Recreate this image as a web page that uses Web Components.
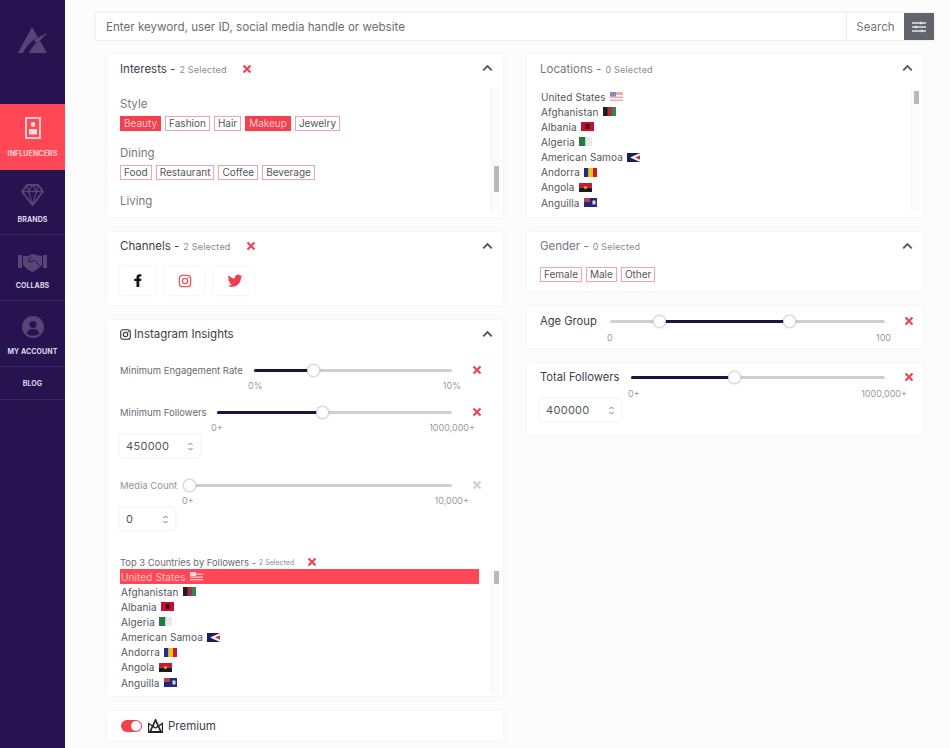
<!DOCTYPE html>
<html><head><meta charset="utf-8">
<style>
html,body{margin:0;height:748px;overflow:hidden;background:#fcfcfc;font-family:Inter,"Liberation Sans",sans-serif;color:#3c3c44}
#app{display:flex;height:748px}
#main{flex:1;min-width:0;display:flex;flex-direction:column;padding:13px 16px 0 30px;gap:14px}
#cols{display:grid;grid-template-columns:396px 396px;column-gap:24px;padding-left:12px}
.col{display:flex;flex-direction:column;gap:15px}
</style></head><body>
<template id="t-card"><style>
:host{display:block;background:#fff;box-shadow:0 0 4px rgba(0,0,0,.06);box-sizing:border-box;position:relative;padding:0 13px}
.head{display:flex;align-items:center;height:var(--hh,30px);font-size:11.5px;color:var(--hc,#3e3e48)}
.sub{font-size:9px;color:#8b8b92;margin-left:4px;letter-spacing:.2px}
.chev{position:absolute;right:10px;top:10px}
</style><div class="head"><slot name="icon"></slot><span id="t"></span><span class="sub" id="s"></span><span id="x"></span></div>
<svg class="chev" width="11" height="8" viewBox="0 0 11 8"><path d="M1.2 6.400 5.500 2l4.300 4.400" fill="none" stroke="#555" stroke-width="1.800"/></svg>
<slot></slot></template>

<template id="t-tag"><style>
:host{display:inline-block;font-size:10px;line-height:13px;padding:0 3px;border:1px solid #eda7ae;color:#55555c;box-shadow:0 0 1px rgba(0,0,0,.15)}
:host([on]){background:#f2404f;color:#ffc7cc;border-color:#f2404f}
</style><slot></slot></template>

<template id="t-navitem"><style>
:host{display:flex;flex-direction:column;align-items:center;justify-content:flex-end;box-sizing:border-box;border-bottom:1px solid #38265f;color:#ddd8e8;font-size:7px;font-weight:700;letter-spacing:.1px;padding-bottom:10px;height:66px}
:host([active]){background:#ff4756;color:#ffd0d4;border-bottom:0;padding-bottom:12px}
:host([plain]){height:33px;padding-bottom:11px}
.i{display:flex;margin-bottom:9px}
:host([active]) .i{margin-bottom:10px}
</style><div class="i"><slot name="icon"></slot></div><slot></slot></template>

<template id="t-close"><style>
:host{display:inline-flex}
</style><svg width="10" height="10" viewBox="0 0 10 10"><path d="M1.500 1.500l7 7M8.500 1.500l-7 7" stroke="currentColor" stroke-width="2.100"/></svg></template>

<template id="t-slider"><style>
:host{display:block;position:relative;font-size:9.5px;color:#6a6a72}
.row{display:flex;align-items:center;height:14px}
.lab{white-space:nowrap;margin-right:var(--lg,10px)}
.tw{flex:1;min-width:0;position:relative;height:3px;background:#cfcfd2;border-radius:2px;margin-right:var(--rg,51px)}
.fill{position:absolute;top:0;height:3px;background:#1b1340;border-radius:2px}
.th{position:absolute;top:-5px;width:13px;height:13px;margin-left:-6px;background:#fff;border-radius:50%;border:1px solid #d8d8da;box-sizing:border-box;box-shadow:0 0 2px rgba(0,0,0,.25)}
.ends{display:flex;justify-content:space-between;font-size:9px;color:#9a9aa0;line-height:11px;margin-top:var(--et,3px);margin-right:var(--er,28px);margin-left:var(--ei,0)}
x-close{position:absolute;right:var(--xr,16px);top:2px;color:#ec4152}
:host([off]) x-close{color:#cfcfd2}
:host([off]) .lab{color:#94949a}
</style><div class="row"><span class="lab" id="l"></span><div class="tw" id="tw"></div><x-close></x-close></div><div class="ends"><span id="a"></span><span id="b"></span></div></template>

<template id="t-stepper"><style>
:host{display:flex;align-items:center;box-sizing:border-box;height:22px;font-size:11px;color:#55555c;padding:0 6px;box-shadow:0 0 3px rgba(0,0,0,.1);background:#fff;justify-content:space-between;letter-spacing:.3px}
</style><slot></slot><svg width="7" height="11" viewBox="0 0 7 11"><path d="M1.500 4 3.500 2l2 2M1.500 7l2 2 2-2" fill="none" stroke="#777" stroke-width="1"/></svg></template>

<template id="t-flagrow"><style>
:host{display:flex;align-items:center;height:15.15px;font-size:10px;color:#55555c;letter-spacing:.1px;white-space:nowrap}
:host([on]){background:#ff4756;color:#ffc7cc}
svg{margin-left:4px;display:block}
</style><slot></slot><svg id="f" width="13" height="9" viewBox="0 0 13 9"></svg></template>

<template id="t-countries"><style>
:host{display:block;position:relative;overflow:hidden;margin-right:-10px}
.bar{position:absolute;right:0;top:0;bottom:0;width:9px;background:#fbfbfb;border-left:1px solid #f3f3f3;box-sizing:border-box}
.bar i{position:absolute;left:2px;width:5px;height:13px;top:var(--bt,2px);background:#b9b9bc}
.rows{margin-right:var(--lr,12px)}
</style><div class="rows"><slot></slot></div><div class="bar"><i></i></div></template>

<div id="app">
<app-sidebar></app-sidebar>
<div id="main">
<search-bar></search-bar>
<div id="cols">
<div class="col">
<filter-card title="Interests -" sub="2 Selected" close style="height:163px">
 <interest-list></interest-list>
</filter-card>
<filter-card title="Channels -" sub="2 Selected" close style="height:73px;--hh:28px">
 <channel-row></channel-row>
</filter-card>
<filter-card title="Instagram Insights" style="height:376px;--hh:28px">
 <svg slot="icon" width="11" height="11" viewBox="0 0 12 12" style="margin-right:3px"><rect x=".8" y=".8" width="10.400" height="10.400" rx="2.600" fill="none" stroke="#333" stroke-width="1.200"/><circle cx="6" cy="6" r="2.400" fill="none" stroke="#333" stroke-width="1.200"/><circle cx="9" cy="3" r=".7" fill="#333"/></svg>
 <insta-body></insta-body>
</filter-card>
<premium-card></premium-card>
</div>
<div class="col">
<filter-card title="Locations -" sub="0 Selected" style="height:163px;--hc:#77777e">
 <x-countries style="margin-top:5px;height:121px"></x-countries>
</filter-card>
<filter-card title="Gender -" sub="0 Selected" style="height:59px;--hc:#77777e;--hh:28px">
 <tag-line style="margin-top:7px" items="Female,Male,Other" gap="4"></tag-line>
</filter-card>
<slider-card style="height:42px">
 <x-slider label="Age Group" a="0" b="100" from="18" to="65" style="font-size:11.2px;color:#3e3e48;--lg:13px;--rg:25px;--xr:-4px;--er:19px;--et:4px;--ei:67px"></x-slider>
</slider-card>
<slider-card style="height:72px;padding-top:7px">
 <x-slider label="Total Followers" a="0+" b="1000,000+" from="0" to="40.500" style="font-size:11.2px;color:#3e3e48;--lg:12px;--rg:25px;--xr:-4px;--er:3px;--et:4px;--ei:88px"></x-slider>
 <x-stepper style="width:81px">400000</x-stepper>
</slider-card>
</div>
</div>
</div>
</div>
<script>
const tpl=id=>document.getElementById(id).content.cloneNode(true);
const def=(n,c)=>customElements.define(n,c);
const shadow=(el,id)=>{const r=el.attachShadow({mode:'open'});r.appendChild(tpl(id));return r};
const svg=(w,h,vb,inner,extra='')=>`<svg slot="icon" width="${w}" height="${h}" viewBox="${vb}" ${extra}>${inner}</svg>`;

class XClose extends HTMLElement{constructor(){super();shadow(this,'t-close')}}
def('x-close',XClose);

class FilterCard extends HTMLElement{constructor(){super();const r=shadow(this,'t-card');
 r.getElementById('t').textContent=this.getAttribute('title');
 r.getElementById('s').textContent=this.getAttribute('sub')||'';
 if(this.hasAttribute('close')){const c=document.createElement('x-close');c.style.color='#ec4152';const x=r.getElementById('x');x.append(c);x.style.marginLeft='15px';x.style.display='inline-flex'}
 this.removeAttribute('title');}}
def('filter-card',FilterCard);

class XTag extends HTMLElement{constructor(){super();shadow(this,'t-tag')}}
def('x-tag',XTag);

class TagLine extends HTMLElement{connectedCallback(){
 if(this.shadowRoot)return;const r=this.attachShadow({mode:'open'});
 const g=this.getAttribute('gap')||4,on=(this.getAttribute('on')||'').split(',');
 r.innerHTML=`<style>:host{display:flex;gap:${g}px}</style>`+this.getAttribute('items').split(',').map(t=>`<x-tag ${on.includes(t)?'on':''}>${t}</x-tag>`).join('');
}}
def('tag-line',TagLine);

class InterestList extends HTMLElement{constructor(){super();const r=this.attachShadow({mode:'open'});
 r.innerHTML=`<style>:host{display:block;position:relative;height:125px;margin:4px -10px 0 0;padding-top:9px;box-sizing:border-box;overflow:hidden}
 h4{margin:0;font-weight:400;font-size:11.5px;line-height:15px;color:#77777e}
 tag-line{margin:4px 0 14.500px}
 .bar{position:absolute;right:0;top:0;bottom:0;width:9px;background:#fbfbfb;border-left:1px solid #f4f4f4;box-sizing:border-box}
 .bar i{position:absolute;left:2px;top:78px;width:5px;height:26px;background:#b9b9bc}</style>
 <h4>Style</h4><tag-line items="Beauty,Fashion,Hair,Makeup,Jewelry" on="Beauty,Makeup"></tag-line>
 <h4>Dining</h4><tag-line items="Food,Restaurant,Coffee,Beverage"></tag-line>
 <h4>Living</h4><div class="bar"><i></i></div>`;}}
def('interest-list',InterestList);

const fb='<path d="M10 20v-8H7V9h3V7c0-2.500 1.500-4 4-4h2.500v3H15c-1 0-1.300.5-1.300 1.300V9h2.900l-.5 3h-2.400v8z" fill="#111"/>';
const ig='<rect x="4.500" y="4.500" width="15" height="15" rx="4" fill="none" stroke="#ec5a6a" stroke-width="1.800"/><circle cx="12" cy="12" r="3.500" fill="none" stroke="#ec5a6a" stroke-width="1.800"/><circle cx="16.200" cy="7.800" r="1" fill="#ec5a6a"/>';
const tw='<path d="M22 5.500c-.8.400-1.600.6-2.400.7.900-.5 1.500-1.300 1.800-2.300-.8.500-1.700.8-2.600 1a4.100 4.100 0 0 0-7 3.700C8.400 8.400 5.400 6.800 3.400 4.300c-1.100 1.900-.5 4.300 1.300 5.500-.7 0-1.300-.2-1.900-.5 0 2 1.400 3.700 3.300 4.100-.6.200-1.200.2-1.800.1.500 1.600 2 2.800 3.800 2.800A8.300 8.300 0 0 1 2 18c1.800 1.200 4 1.800 6.300 1.800 7.500 0 11.800-6.300 11.600-12 .8-.6 1.500-1.400 2.100-2.300z" fill="#ec3f50"/>';
class ChannelRow extends HTMLElement{constructor(){super();const r=this.attachShadow({mode:'open'});
 const b=(w,s,g)=>`<div style="width:${w}px;height:28px;display:flex;align-items:center;justify-content:center;box-shadow:0 0 3px rgba(0,0,0,.08);margin-right:${g}px"><svg width="18" height="18" viewBox="0 0 24 24">${s}</svg></div>`;
 r.innerHTML=`<style>:host{display:flex;margin-top:7px}</style>`+b(35,fb,10)+b(39,ig,10)+b(41,tw,0);}}
def('channel-row',ChannelRow);

class XSlider extends HTMLElement{constructor(){super();const r=shadow(this,'t-slider');
 r.getElementById('l').textContent=this.getAttribute('label');
 r.getElementById('a').textContent=this.getAttribute('a');
 r.getElementById('b').textContent=this.getAttribute('b');
 const f=+this.getAttribute('from'),t=+this.getAttribute('to'),tw=r.getElementById('tw');
 tw.innerHTML=`<div class="fill" style="left:${f}%;width:${t-f}%"></div>`+(f>0?`<div class="th" style="left:${f}%"></div>`:'')+`<div class="th" style="left:${t}%"></div>`;
}}
def('x-slider',XSlider);

class XStepper extends HTMLElement{constructor(){super();shadow(this,'t-stepper')}}
def('x-stepper',XStepper);

const flags={
 us:'<rect width="13" height="9" fill="#f3a9ae"/><rect y="3" width="13" height="1.500" fill="#fff"/><rect y="6" width="13" height="1.500" fill="#fff"/><rect width="6" height="4.500" fill="#8a88b5"/>',
 af:'<rect width="13" height="9" fill="#1c1c22"/><rect x="4.500" width="4.500" height="9" fill="#a5303c"/><rect x="9" width="4" height="9" fill="#2f8a4b"/>',
 al:'<rect width="13" height="9" fill="#c8102e"/><rect x="4.500" y="2" width="4" height="5" fill="#3a1018"/>',
 dz:'<rect width="6.500" height="9" fill="#1f7a45"/><rect x="6.500" width="6.500" height="9" fill="#e9e9e9"/>',
 as:'<rect width="13" height="9" fill="#1c1f55"/><path d="M13 0 3 4.500 13 9z" fill="#eee"/><path d="M13 2.500 8 4.500 13 6.500z" fill="#b03040"/>',
 ad:'<rect width="4.500" height="9" fill="#1f2e8c"/><rect x="4.500" width="4.500" height="9" fill="#f3c400"/><rect x="9" width="4" height="9" fill="#d3142f"/>',
 ao:'<rect width="13" height="4.500" fill="#d3142f"/><rect y="4.500" width="13" height="4.500" fill="#1a1a1e"/><circle cx="6.500" cy="4.500" r="1.500" fill="#e3b400"/>',
 ai:'<rect width="13" height="9" fill="#1f2a7c"/><rect width="6" height="4" fill="#b4404d"/><rect x="8.500" y="2.500" width="3" height="4" fill="#e9d9c9"/>',
 usw:'<rect width="13" height="9" fill="#ff4756"/><rect y="1.500" width="13" height="1.300" fill="#ffc7cc"/><rect y="4.500" width="13" height="1.300" fill="#ffc7cc"/><rect y="7" width="13" height="1.300" fill="#ffc7cc"/><rect width="6" height="4" fill="#ffd9dc"/>'
};
class FlagRow extends HTMLElement{constructor(){super();const r=shadow(this,'t-flagrow');r.getElementById('f').innerHTML=flags[this.getAttribute('f')]}}
def('flag-row',FlagRow);

const list=[['United States','us'],['Afghanistan','af'],['Albania','al'],['Algeria','dz'],['American Samoa','as'],['Andorra','ad'],['Angola','ao'],['Anguilla','ai']];
class XCountries extends HTMLElement{constructor(){super();shadow(this,'t-countries');
 const sel=this.hasAttribute('sel');
 this.innerHTML=list.map(([n,f],i)=>sel&&i==0?`<flag-row on f="usw" style="padding-left:1px">${n}</flag-row>`:`<flag-row f="${f}" style="padding-left:1px">${n}</flag-row>`).join('');}}
def('x-countries',XCountries);

class InstaBody extends HTMLElement{constructor(){super();const r=this.attachShadow({mode:'open'});
 r.innerHTML=`<style>:host{display:block}
 x-slider{margin-top:var(--mt)}
 .top{display:flex;align-items:center;font-size:9.4px;color:#6a6a72;height:12px;margin-top:26px}
 .top small{font-size:7px;color:#8b8b92;margin-left:3px}
 x-close{color:#ec4152;margin-left:13px}
 </style>
 <x-slider label="Minimum Engagement Rate" a="0%" b="10%" from="0" to="30" style="--mt:15px;--lg:11px;--rg:38px;--xr:8px;--er:29px;--ei:128px"></x-slider>
 <x-slider label="Minimum Followers" a="0+" b="1000,000+" from="0" to="45" style="--mt:14px;--lg:10px;--rg:38px;--xr:8px;--er:15px;--ei:91px"></x-slider>
 <x-stepper style="width:80px;margin-top:2px">450000</x-stepper>
 <x-slider off label="Media Count" a="0+" b="10,000+" from="0" to="0" style="--mt:21px;--lg:12px;--rg:38px;--xr:8px;--er:21px;--ei:62px"></x-slider>
 <x-stepper style="width:55px;margin-top:2px">0</x-stepper>
 <div class="top">Top 3 Countries by Followers - <small>2 Selected</small><x-close></x-close></div>
 <x-countries sel style="margin-top:1px;height:125px;--lr:21px;--bt:2px"></x-countries>`;
 }}
def('insta-body',InstaBody);

class SliderCard extends HTMLElement{constructor(){super();const r=this.attachShadow({mode:'open'});
 r.innerHTML=`<style>:host{display:block;background:#fff;box-shadow:0 0 4px rgba(0,0,0,.06);padding:8px 13px 0;box-sizing:border-box}</style><slot></slot>`;}}
def('slider-card',SliderCard);

class PremiumCard extends HTMLElement{constructor(){super();const r=this.attachShadow({mode:'open'});
 r.innerHTML=`<style>:host{display:flex;align-items:center;height:30px;background:#fff;box-shadow:0 0 4px rgba(0,0,0,.06);padding:0 13px 0 14px;font-size:11.5px;color:#3e3e48;box-sizing:border-box}
 .sw{width:21px;height:12px;border-radius:6px;background:#f2404f;position:relative;margin-right:6px}
 .sw i{position:absolute;right:1px;top:1px;width:10px;height:10px;border-radius:50%;background:#fff}</style>
 <div class="sw"><i></i></div>
 <svg width="15" height="14" viewBox="0 0 15 14" style="margin-right:5px"><path d="M7.500 1 2 13h11z" fill="none" stroke="#222" stroke-width="1.800"/><path d="M.5 4.500l7 4.500 7-4.500v9H.5z" fill="none" stroke="#222" stroke-width="1.400"/></svg>
 Premium`;}}
def('premium-card',PremiumCard);

class SearchBar extends HTMLElement{constructor(){super();const r=this.attachShadow({mode:'open'});
 r.innerHTML=`<style>:host{display:flex;align-items:stretch;height:27px;margin-left:1px;background:#fff;box-shadow:0 0 3px rgba(0,0,0,.12);font-size:11.6px;color:#6d6d74}
 .q{flex:1;display:flex;align-items:center;padding-left:10px}
 .s{width:58px;border-left:1px solid #ececec;display:flex;align-items:center;justify-content:center;box-sizing:border-box;color:#77777e}
 .b{width:30px;background:#63636d;display:flex;align-items:center;justify-content:center}</style>
 <div class="q">Enter keyword, user ID, social media handle or website</div><div class="s">Search</div>
 <div class="b"><svg width="14" height="12" viewBox="0 0 14 12"><path d="M0 2h14M0 6h14M0 10h14" stroke="#e4e4e8" stroke-width="1.400"/><rect x="8" y=".8" width="2" height="2.400" fill="#e4e4e8"/><rect x="3" y="4.800" width="2" height="2.400" fill="#e4e4e8"/><rect x="9" y="8.800" width="2" height="2.400" fill="#e4e4e8"/></svg></div>`;}}
def('search-bar',SearchBar);

class NavItem extends HTMLElement{constructor(){super();shadow(this,'t-navitem')}}
def('nav-item',NavItem);

class AppSidebar extends HTMLElement{constructor(){super();const r=this.attachShadow({mode:'open'});
 const c='#574578';
 r.innerHTML=`<style>:host{display:flex;flex-direction:column;width:65px;flex:none;background:#27134f;height:748px}
 .logo{height:104px;display:flex;justify-content:center;padding-top:26px;box-sizing:border-box}</style>
 <div class="logo"><svg width="32" height="29" viewBox="0 0 32 29"><path d="M15 1 1 27h29z" fill="${c}"/><path d="M6 27C10 18 18 11 30 7 22 13 16 19 12 27z" fill="#27134f"/><path d="M17 14C21 11 25 9 31 7 26 11 23 14 20 18z" fill="${c}"/></svg></div>
 <nav-item active style="height:66px">${svg(16,22,'0 0 16 22','<rect x="1" y="1" width="14" height="20" fill="none" stroke="#ffd9dc" stroke-width="1.800"/><circle cx="8" cy="7.500" r="2.400" fill="#ffd9dc"/><rect x="4" y="12" width="8" height="5.500" fill="#ffd9dc"/>')}INFLUENCERS</nav-item>
 <nav-item style="height:65px">${svg(23,22,'0 0 23 22',`<path d="M6 1h11l5 6.500-10.500 13.500L1 7.500z" fill="none" stroke="${c}" stroke-width="2"/><path d="M1 7.500h21M7.500 7.500l4 13 4-13M6 1l1.500 6.500L11.500 1l4 6.500L17 1" fill="none" stroke="${c}" stroke-width="1.300"/>`)}BRANDS</nav-item>
 <nav-item style="height:66px">${svg(29,20,'0 0 29 20',`<path d="M0 3h4v13H0zM25 3h4v13h-4z" fill="${c}"/><path d="M5 4h5l4-2 4 1 6 1v9l-7 6-3 1-5-3-4-4z" fill="${c}"/><path d="M13 5l-3 4 3 1 3-2 6 6" fill="none" stroke="#27134f" stroke-width="1"/>`)}COLLABS</nav-item>
 <nav-item style="height:66px">${svg(22,22,'0 0 22 22',`<circle cx="11" cy="11" r="11" fill="${c}"/><circle cx="11" cy="8.500" r="3.600" fill="#27134f"/><path d="M4.500 17.500c1-3 3.500-4.500 6.500-4.500s5.500 1.500 6.500 4.500c-3.500 3-9.500 3-13 0z" fill="#27134f"/>`)}MY ACCOUNT</nav-item>
 <nav-item plain>BLOG</nav-item>`;}}
def('app-sidebar',AppSidebar);
</script>
</body></html>
